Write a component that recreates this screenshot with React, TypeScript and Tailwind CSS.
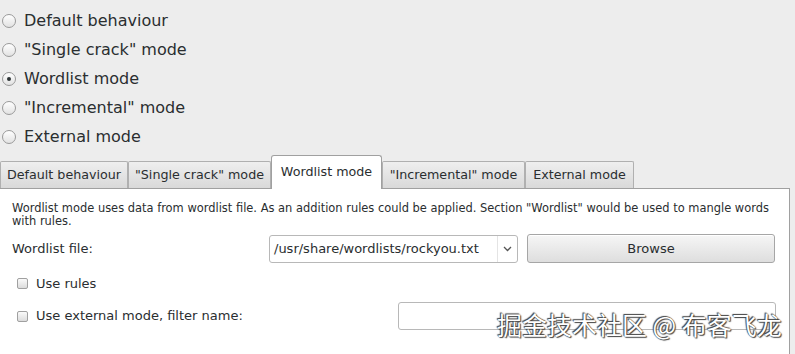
import { ReactNode } from "react";

const modes = [
  { label: "Default behaviour", checked: false },
  { label: '"Single crack" mode', checked: false },
  { label: "Wordlist mode", checked: true },
  { label: '"Incremental" mode', checked: false },
  { label: "External mode", checked: false },
];

const tabs = [
  { label: "Default behaviour", w: "w-[128px]" },
  { label: '"Single crack" mode', w: "w-[143px]" },
  { label: "Wordlist mode", w: "w-[111px]", active: true },
  { label: '"Incremental" mode', w: "w-[143px]" },
  { label: "External mode", w: "w-[109px]" },
];

function Radio({ checked }: { checked: boolean }) {
  return (
    <span className="w-[14px] h-[14px] rounded-full border border-[#9a9a9a] bg-gradient-to-b from-white to-[#e2e2e2] flex items-center justify-center shrink-0">
      {checked && <span className="w-[4px] h-[4px] rounded-full bg-[#2e3436]" />}
    </span>
  );
}

function Check({ children }: { children: ReactNode }) {
  return (
    <div className="flex items-center">
      <span className="ml-[5px] w-[11px] h-[11px] rounded-[2px] border border-[#a0a0a0] bg-gradient-to-b from-[#fafafa] to-[#dcdcdc]" />
      <span className="ml-[8px]">{children}</span>
    </div>
  );
}

export default function App() {
  return (
    <div className="relative w-[795px] h-[354px] overflow-hidden bg-[#ededed] text-[#2a2e30] font-['DejaVu_Sans',sans-serif]">
      {/* mode radios */}
      <div className="pt-[6px] pl-[2px] text-[16px]">
        {modes.map((m) => (
          <div key={m.label} className="h-[29px] flex items-center">
            <Radio checked={m.checked} />
            <span className="ml-[8px] leading-none">{m.label}</span>
          </div>
        ))}
      </div>

      {/* tabs */}
      <div className="mt-[4px] flex items-end h-[33px] text-[12.7px]">
        {tabs.map((t) =>
          t.active ? (
            <div
              key={t.label}
              className={`${t.w} h-[34px] -mb-px z-10 bg-white border border-b-0 border-[#a0a0a0] rounded-t-[3px] flex items-center justify-center pb-[2px]`}
            >
              {t.label}
            </div>
          ) : (
            <div
              key={t.label}
              className={`${t.w} h-[27px] bg-gradient-to-b from-[#efefef] to-[#d9d9d9] border border-b-0 border-[#b0b0b0] rounded-t-[2px] flex items-center justify-center`}
            >
              {t.label}
            </div>
          )
        )}
      </div>

      {/* page */}
      <div className="w-[790px] h-[170px] bg-white border border-[#a0a0a0] border-l-0 pl-[12px] pr-[13px] pt-[13px]">
        <p className="text-[11.45px] leading-[12.5px]">
          Wordlist mode uses data from wordlist file. As an addition rules could be applied. Section "Wordlist" would be used to mangle words with rules.
        </p>

        <div className="mt-[7px] flex items-center text-[13px]">
          <span className="w-[257px]">Wordlist file:</span>
          <div className="w-[249px] h-[28px] flex border border-[#b8b8b8] rounded-[3px] bg-white">
            <span className="flex-1 pl-[4px] flex items-center">/usr/share/wordlists/rockyou.txt</span>
            <span className="w-[20px] border-l border-[#e4e4e4] flex items-center justify-center">
              <svg width="9" height="6" viewBox="0 0 9 6" fill="none" stroke="#555" strokeWidth="1.3">
                <path d="M1 1 L4.5 4.5 L8 1" />
              </svg>
            </span>
          </div>
          <button className="ml-[9px] w-[248px] h-[29px] rounded-[3px] border border-[#a6a6a6] bg-gradient-to-b from-[#f6f6f6] to-[#dedede] shadow-[inset_0_1px_0_#fff]">
            Browse
          </button>
        </div>

        <div className="mt-[11px] h-[16px] text-[13px]">
          <Check>Use rules</Check>
        </div>

        <div className="mt-[12px] flex items-center text-[13px]">
          <div className="w-[386px]">
            <Check>Use external mode, filter name:</Check>
          </div>
          <div className="w-[378px] h-[28px] border border-[#b8b8b8] rounded-[3px] bg-white" />
        </div>
      </div>

      {/* watermark */}
      <div className="absolute left-[497px] top-[312px] text-[25px] leading-none text-white font-['Noto_Sans_CJK_SC',sans-serif] [text-shadow:0_0_1px_#333,1px_1px_1px_#444,-1px_-1px_1px_#444]">
        掘金技术社区 @ 布客飞龙
      </div>
    </div>
  );
}
